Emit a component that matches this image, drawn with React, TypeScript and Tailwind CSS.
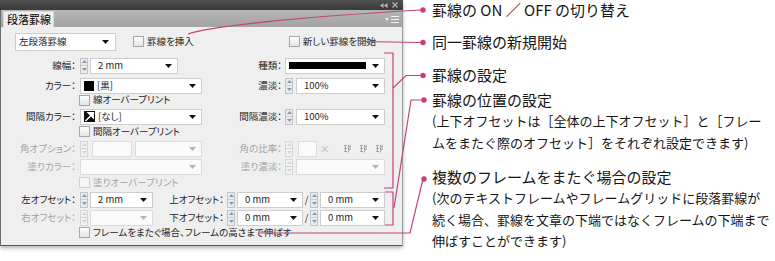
import type { ReactNode } from "react";

// 段落罫線パネル + 注釈

function Tri({ dim }: { dim?: boolean }) {
  return (
    <svg width="7" height="4" viewBox="0 0 7 4">
      <path d="M0 0h7L3.5 4z" fill={dim ? "#b4b4b4" : "#111"} />
    </svg>
  );
}

function Spin({ dim }: { dim?: boolean }) {
  const c = dim ? "#cfd6dd" : "#7f9ab5";
  return (
    <div
      className={`flex h-[16px] w-[8px] flex-col border ${
        dim ? "border-[#d6d6d6] bg-[#f2f2f2]" : "border-[#c3c3c3] bg-[#ebebeb]"
      }`}
    >
      <div className="flex flex-1 items-center justify-center">
        <svg width="5" height="3" viewBox="0 0 5 3">
          <path d="M0 3h5L2.5 0z" fill={c} />
        </svg>
      </div>
      <div className="h-px bg-[#d0d0d0]" />
      <div className="flex flex-1 items-center justify-center">
        <svg width="5" height="3" viewBox="0 0 5 3">
          <path d="M0 0h5L2.5 3z" fill={c} />
        </svg>
      </div>
    </div>
  );
}

function Combo({
  className,
  children,
  dim,
  arrow = true,
}: {
  className: string;
  children?: ReactNode;
  dim?: boolean;
  arrow?: boolean;
}) {
  return (
    <div
      className={`flex h-[16px] items-center justify-between pl-[7px] pr-[5px] ${className} ${
        dim ? "border border-[#dcdcdc] bg-[#fafafa]" : "border border-[#cdcdcd] bg-white"
      }`}
    >
      <div className="flex items-center">{children}</div>
      {arrow && <Tri dim={dim} />}
    </div>
  );
}

function Check({ dim }: { dim?: boolean }) {
  return (
    <div
      className={`h-[11px] w-[11px] border ${
        dim
          ? "border-[#d2d2d2] bg-[#f5f5f5]"
          : "border-[#a8a8a8] bg-gradient-to-b from-[#fdfdfd] to-[#e4e4e4]"
      }`}
    />
  );
}

function Label({ text, dim, w = "w-[76px]" }: { text: string; dim?: boolean; w?: string }) {
  return (
    <div className={`${w} shrink-0 text-right ${dim ? "text-[#a3a3a3]" : "text-[#1e1e1e]"}`}>{text}</div>
  );
}

function CheckRow({ text, dim, h }: { text: string; dim?: boolean; h: string }) {
  return (
    <div className={`flex ${h} items-center pl-[79px]`}>
      <Check dim={dim} />
      <span className={`ml-[3px] ${dim ? "text-[#a3a3a3]" : "text-[#1e1e1e]"}`}>{text}</span>
    </div>
  );
}

function CornerIcon() {
  return (
    <svg width="9" height="9" viewBox="0 0 9 9" fill="none" stroke="#a5a5a5" strokeWidth="1">
      <path d="M1 1.5h3M2.5 1.5v6M1 4.5h3M1 7.5h3M5.5 1v7.5M5.5 2h2.5M7 2v3M5.5 5.5h2.5" />
    </svg>
  );
}

function Panel() {
  return (
    <div className="flex h-[246px] w-[403px] shrink-0 flex-col shadow-[inset_1px_0_0_#6a6a6a,inset_-1px_0_0_#9a9a9a,inset_0_-1px_0_#555,0_2px_4px_rgba(0,0,0,0.3)]">
      {/* タイトルバー */}
      <div className="flex h-[10px] items-center justify-end gap-[4px] bg-gradient-to-b from-[#505050] to-[#3a3a3a] pr-[5px]">
        <svg width="8" height="5" viewBox="0 0 8 5">
          <path d="M0 2.5L3.5 0v5zM4 2.5L7.5 0v5z" fill="#b5b5b5" />
        </svg>
        <svg width="6" height="6" viewBox="0 0 6 6">
          <path d="M0.5 0.5l5 5M5.5 0.5l-5 5" stroke="#b5b5b5" strokeWidth="1.3" />
        </svg>
      </div>
      {/* タブ */}
      <div className="flex h-[17px] items-end justify-between bg-gradient-to-b from-[#b6b6b6] to-[#a3a3a3] shadow-[inset_1px_0_0_#6a6a6a,inset_-1px_0_0_#9a9a9a]">
        <div className="ml-[3px] flex h-[16px] w-[51px] items-center border-t border-l border-r border-[#d8d8d8] bg-[#efefef] pl-[3px] text-[11px] text-black">
          段落罫線
        </div>
        <div className="mb-[4px] mr-[4px] flex items-center gap-[2px]">
          <svg width="4" height="3" viewBox="0 0 4 3">
            <path d="M0 0h4L2 3z" fill="#f2f2f2" />
          </svg>
          <svg width="8" height="7" viewBox="0 0 8 7">
            <path d="M0 0.5h8M0 3.5h8M0 6.5h8" stroke="#f2f2f2" strokeWidth="1" />
          </svg>
        </div>
      </div>
      {/* 本体 */}
      <div className="flex flex-1 flex-col bg-[#efefef] pt-[6px] text-[9.5px] leading-none shadow-[inset_1px_0_0_#6a6a6a,inset_-1px_0_0_#9a9a9a,inset_0_-1px_0_#555]">
        <div className="flex h-[17px] items-center">
          <div className="ml-[15px] flex h-[18px] w-[101px] items-center justify-between border border-[#cdcdcd] bg-white pl-[3px] pr-[6px]">
            <span>左段落罫線</span>
            <Tri />
          </div>
          <div className="ml-[17px] flex items-center">
            <Check />
            <span className="ml-[3px]">罫線を挿入</span>
          </div>
          <div className="ml-[95px] flex items-center">
            <Check />
            <span className="ml-[3px]">新しい罫線を開始</span>
          </div>
        </div>

        <div className="mt-[7px] flex h-[17px] items-center">
          <div className="flex w-[205px] items-center">
            <Label text="線幅：" />
            <div className="ml-[4px]"><Spin /></div>
            <Combo className="ml-[2px] w-[88px]">2 mm</Combo>
          </div>
          <Label text="種類：" w="w-[77px]" />
          <Combo className="ml-[3px] w-[100px] !pl-[3px]">
            <div className="h-[7px] w-[77px] bg-black" />
          </Combo>
        </div>

        <div className="mt-[3px] flex h-[17px] items-center">
          <div className="flex w-[205px] items-center">
            <Label text="カラー：" />
            <Combo className="ml-[4px] w-[122px] !pl-[3px]">
              <div className="h-[10px] w-[10px] bg-black" />
              <span className="ml-[3px]">[黒]</span>
            </Combo>
          </div>
          <Label text="濃淡：" w="w-[77px]" />
          <div className="ml-[3px]"><Spin /></div>
          <Combo className="ml-[3px] w-[89px]">100%</Combo>
        </div>

        <CheckRow text="線オーバープリント" h="h-[12px]" />

        <div className="mt-[2px] flex h-[17px] items-center">
          <div className="flex w-[205px] items-center">
            <Label text="間隔カラー：" />
            <Combo className="ml-[4px] w-[122px] !pl-[3px]">
              <svg width="11" height="11" viewBox="0 0 11 11">
                <rect x="0.5" y="0.5" width="10" height="10" fill="#fff" stroke="#111" />
                <path d="M0.5 10.5V0.5h1.5l8.5 8.5v1.5z" fill="#111" />
                <path d="M1.5 10L10 1.5" stroke="#fff" strokeWidth="1.4" />
              </svg>
              <span className="ml-[3px]">[なし]</span>
            </Combo>
          </div>
          <Label text="間隔濃淡：" w="w-[77px]" />
          <div className="ml-[3px]"><Spin /></div>
          <Combo className="ml-[3px] w-[89px]">100%</Combo>
        </div>

        <CheckRow text="間隔オーバープリント" h="h-[13px]" />

        <div className="mt-[2px] flex h-[17px] items-center">
          <div className="flex w-[205px] items-center">
            <Label text="角オプション：" dim />
            <div className="ml-[4px]"><Spin dim /></div>
            <Combo className="ml-[4px] w-[40px]" dim arrow={false} />
            <Combo className="ml-[3px] w-[67px]" dim />
          </div>
          <Label text="角の比率：" dim w="w-[77px]" />
          <div className="ml-[3px]"><Spin dim /></div>
          <Combo className="ml-[5px] w-[19px]" dim arrow={false} />
          <span className="ml-[3px] text-[#b0b0b0]">×</span>
          <div className="ml-[13px] flex items-center gap-[7px]">
            <CornerIcon />
            <CornerIcon />
            <CornerIcon />
          </div>
        </div>

        <div className="mt-[1px] flex h-[17px] items-center">
          <div className="flex w-[205px] items-center">
            <Label text="塗りカラー：" dim />
            <Combo className="ml-[4px] w-[122px]" dim />
          </div>
          <Label text="塗り濃淡：" dim w="w-[77px]" />
          <div className="ml-[3px]"><Spin dim /></div>
          <Combo className="ml-[3px] w-[89px]" dim />
        </div>

        <CheckRow text="塗りオーバープリント" dim h="h-[15px]" />

        <div className="mt-[1px] flex h-[17px] items-center">
          <Label text="左オフセット：" />
          <div className="ml-[4px]"><Spin /></div>
          <Combo className="ml-[2px] w-[63px]">2 mm</Combo>
          <Label text="上オフセット：" w="w-[71px]" />
          <div className="ml-[3px]"><Spin /></div>
          <Combo className="ml-[2px] w-[66px]">0 mm</Combo>
          <span className="w-[7px] text-center">/</span>
          <Spin />
          <Combo className="ml-[2px] w-[65px]">0 mm</Combo>
        </div>

        <div className="mt-[1px] flex h-[17px] items-center">
          <Label text="右オフセット：" dim />
          <div className="ml-[4px]"><Spin dim /></div>
          <Combo className="ml-[2px] w-[63px]" dim />
          <Label text="下オフセット：" w="w-[71px]" />
          <div className="ml-[3px]"><Spin /></div>
          <Combo className="ml-[2px] w-[66px]">0 mm</Combo>
          <span className="w-[7px] text-center">/</span>
          <Spin />
          <Combo className="ml-[2px] w-[65px]">0 mm</Combo>
        </div>

        <CheckRow text="フレームをまたぐ場合、フレームの高さまで伸ばす" h="h-[13px]" />
      </div>
    </div>
  );
}

export default function App() {
  return (
    <div className="relative flex h-[261px] w-[775px] items-start overflow-hidden bg-white font-['Noto_Sans_CJK_JP',sans-serif] text-[#1e1e1e] [font-feature-settings:'palt']">
      <Panel />

      <div className="ml-[29px] flex flex-col text-[#151515] [font-feature-settings:normal]">
        <div className="h-[20px] text-[15px] leading-[20px]">罫線の ON ／ OFF の切り替え</div>
        <div className="mt-[12px] h-[20px] text-[15px] leading-[20px]">同一罫線の新規開始</div>
        <div className="mt-[13px] h-[20px] text-[15px] leading-[20px]">罫線の設定</div>
        <div className="mt-[5px] h-[20px] text-[15px] leading-[20px]">罫線の位置の設定</div>
        <div className="text-[13px] leading-[21.5px]">
          <div>(上下オフセットは［全体の上下オフセット］と［フレー</div>
          <div>ムをまたぐ際のオフセット］をそれぞれ設定できます)</div>
        </div>
        <div className="mt-[14px] h-[20px] text-[15px] leading-[20px]">複数のフレームをまたぐ場合の設定</div>
        <div className="text-[13px] leading-[21.5px]">
          <div>(次のテキストフレームやフレームグリッドに段落罫線が</div>
          <div>続く場合、罫線を文章の下端ではなくフレームの下端まで</div>
          <div>伸ばすことができます)</div>
        </div>
      </div>

      {/* 引き出し線 */}
      <svg
        className="pointer-events-none absolute left-0 top-0"
        width="775"
        height="261"
        viewBox="0 0 775 261"
        fill="none"
        stroke="#c4427b"
        strokeWidth="1.2"
      >
        <path d="M188 34C210 26 300 17 421 10" />
        <path d="M361 41.5L421 42.5" />
        <path d="M384 53H393V188H384" />
        <path d="M393 88L406 75.5H421" />
        <path d="M385 192H393V225H385" />
        <path d="M394 208L411 100H422" />
        <path d="M423 179L410 233H258" />
        <g fill="#cf3a78" stroke="none">
          <circle cx="423" cy="10" r="2.7" />
          <circle cx="423" cy="42.5" r="2.7" />
          <circle cx="423" cy="75.5" r="2.7" />
          <circle cx="424" cy="100" r="2.7" />
          <circle cx="424" cy="179" r="2.7" />
        </g>
      </svg>
    </div>
  );
}
